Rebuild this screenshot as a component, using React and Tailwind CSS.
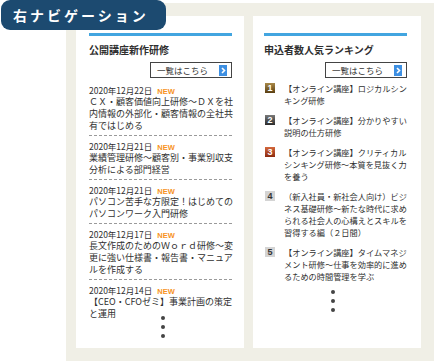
const news = [
  { date: "2020年12月22日", lines: ["ＣＸ・顧客価値向上研修～ＤＸを社", "内情報の外部化・顧客情報の全社共", "有ではじめる"] },
  { date: "2020年12月21日", lines: ["業績管理研修～顧客別・事業別収支", "分析による部門経営"] },
  { date: "2020年12月21日", lines: ["パソコン苦手な方限定！はじめての", "パソコンワーク入門研修"] },
  { date: "2020年12月17日", lines: ["長文作成のためのＷｏｒｄ研修～変", "更に強い仕様書・報告書・マニュア", "ルを作成する"] },
  { date: "2020年12月14日", lines: ["【CEO・CFOゼミ】事業計画の策定", "と運用"] },
];

const ranking = [
  { no: 1, lines: ["【オンライン講座】ロジカルシン", "キング研修"] },
  { no: 2, lines: ["【オンライン講座】分かりやすい", "説明の仕方研修"] },
  { no: 3, lines: ["【オンライン講座】クリティカル", "シンキング研修～本質を見抜く力", "を養う"] },
  { no: 4, lines: ["（新入社員・新社会人向け）ビジ", "ネス基礎研修～新たな時代に求め", "られる社会人の心構えとスキルを", "習得する編（２日間）"] },
  { no: 5, lines: ["【オンライン講座】タイムマネジ", "メント研修～仕事を効率的に進め", "るための時間管理を学ぶ"] },
];

const badgeColors = {
  1: "bg-linear-to-b from-[#a88948] to-[#5b4013] text-white",
  2: "bg-linear-to-b from-[#7a7a7a] to-[#2c2c2c] text-white",
  3: "bg-linear-to-b from-[#d4683c] to-[#8c2a0e] text-white",
  4: "bg-[#d4d4d4] text-[#333]",
  5: "bg-[#d4d4d4] text-[#333]",
};

function MoreButton() {
  return (
    <div className="flex justify-end mt-[5px]">
      <div className="w-[82px] h-[16px] border border-[#444] bg-white flex items-center justify-between pl-[6px] pr-[4px]">
        <span className="text-[8.5px] leading-none text-[#333]">一覧はこちら</span>
        <svg width="8" height="11" viewBox="0 0 8 11">
          <rect width="8" height="11" fill="#3d8fe2" />
          <path d="M3 3l2.5 2.5L3 8" stroke="#fff" strokeWidth="1.6" fill="none" />
        </svg>
      </div>
    </div>
  );
}

function Dots({ className }) {
  return (
    <div className={"flex flex-col gap-[5px] " + className}>
      <span className="w-[4px] h-[4px] rounded-full bg-[#444]" />
      <span className="w-[4px] h-[4px] rounded-full bg-[#444]" />
      <span className="w-[4px] h-[4px] rounded-full bg-[#444]" />
    </div>
  );
}

export default function App() {
  return (
    <div className="relative w-[434px] h-[362px] bg-white font-['Noto_Sans_CJK_JP',sans-serif] text-[#2f2f2f]">
      {/* tab label */}
      <div className="absolute left-[1px] top-0 z-10 w-[165px] h-[30px] rounded-[9px] bg-[#1c4a70] flex items-center pl-[12px]">
        <span className="text-white text-[14px] font-bold tracking-[3px] leading-none">右ナビゲーション</span>
      </div>

      <div className="ml-[66px] pt-[3px]">
        <div className="h-[358px] bg-[#f0efe6] flex gap-[9px] pl-[10px] pt-[13px]">
          {/* left card */}
          <div className="w-[168px] h-[332px] bg-white pl-[13px] pr-[12px] pt-[17px]">
            <div className="h-[3px] bg-[#42a5e0]" />
            <h2 className="mt-[7px] text-[10px] leading-[14px] font-bold">公開講座新作研修</h2>
            <MoreButton />
            <ul className="mt-[6px]">
              {news.map((n, i) => (
                <li key={i} className={i < news.length - 1 ? "pb-[3px] mb-[4px] border-b border-dashed border-[#9a9a9a]" : ""}>
                  <div className="flex items-baseline h-[12px] leading-[12px]">
                    <span className="text-[8.5px]">{n.date}</span>
                    <span className="ml-[5px] text-[7.5px] font-bold text-[#f7931e] font-['Liberation_Sans',sans-serif]">NEW</span>
                  </div>
                  {n.lines.map((l, j) => (
                    <div key={j} className="text-[9px] leading-[12px] whitespace-nowrap">{l}</div>
                  ))}
                </li>
              ))}
            </ul>
            <Dots className="ml-[72px] mt-[-4px]" />
          </div>

          {/* right card */}
          <div className="w-[168px] h-[332px] bg-white pl-[11px] pr-[14px] pt-[17px]">
            <div className="h-[3px] bg-[#42a5e0]" />
            <h2 className="mt-[7px] text-[10px] leading-[14px] font-bold">申込者数人気ランキング</h2>
            <MoreButton />
            <ol className="mt-[4px] flex flex-col gap-[8px]">
              {ranking.map((r) => (
                <li key={r.no} className="flex">
                  <span className={"ml-[1px] mt-[1px] w-[10px] h-[10px] flex items-center justify-center text-[9px] font-bold leading-none font-['Liberation_Sans',sans-serif] shrink-0 " + badgeColors[r.no]}>
                    {r.no}
                  </span>
                  <div className="ml-[9px]">
                    {r.lines.map((l, j) => (
                      <div key={j} className="text-[8.2px] leading-[12px] whitespace-nowrap">{l}</div>
                    ))}
                  </div>
                </li>
              ))}
            </ol>
            <Dots className="ml-[67px] mt-[8px]" />
          </div>
        </div>
      </div>
    </div>
  );
}
